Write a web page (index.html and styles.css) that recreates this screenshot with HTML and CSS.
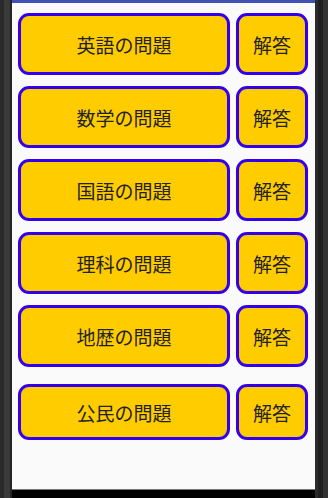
FILE: index.html
```html
<!DOCTYPE html>
<html lang="ja">
<head>
<meta charset="utf-8">
<link rel="stylesheet" href="styles.css">
</head>
<body>
<div class="device">
  <div class="side side-left"></div>
  <div class="screen">
    <div class="topbar"></div>
    <div class="list">
      <div class="row"><button class="btn main">英語の問題</button><button class="btn ans">解答</button></div>
      <div class="row"><button class="btn main">数学の問題</button><button class="btn ans">解答</button></div>
      <div class="row"><button class="btn main">国語の問題</button><button class="btn ans">解答</button></div>
      <div class="row"><button class="btn main">理科の問題</button><button class="btn ans">解答</button></div>
      <div class="row"><button class="btn main">地歴の問題</button><button class="btn ans">解答</button></div>
      <div class="row last"><button class="btn main">公民の問題</button><button class="btn ans">解答</button></div>
    </div>
    <div class="bottom"></div>
  </div>
  <div class="side side-right"></div>
</div>
</body>
</html>
```

FILE: styles.css
```css
html, body {
  margin: 0;
  padding: 0;
  width: 328px;
  height: 498px;
  overflow: hidden;
  background: #000;
}
.device {
  display: flex;
  width: 328px;
  height: 498px;
}
.side {
  flex: none;
  height: 100%;
}
.side-left {
  width: 12px;
  background: linear-gradient(to right, #2a2a2a 0, #2a2a2a 4px, #3a3a3a 4px, #3a3a3a 10px, #242424 10px);
}
.side-right {
  width: 13px;
  background: linear-gradient(to right, #2b2b2b 0, #2b2b2b 3px, #1f1f1f 3px, #1f1f1f 8px, #333 8px);
}
.screen {
  flex: 1;
  display: flex;
  flex-direction: column;
  background: #fafafa;
}
.topbar {
  height: 3px;
  background: #3f51b5;
  flex: none;
}
.list {
  flex: 1;
  display: flex;
  flex-direction: column;
  gap: 11px;
  padding: 10px 7px 0 6px;
}
.row {
  display: flex;
  gap: 6px;
  height: 62px;
}
.row.last {
  margin-top: 6px;
  height: 56px;
}
.btn {
  box-sizing: border-box;
  margin: 0;
  padding: 0;
  background: #ffcc00;
  border: 3px solid #3300ee;
  border-radius: 11px;
  font-family: "Noto Sans CJK JP", "Noto Sans", sans-serif;
  font-size: 19px;
  color: #222;
  height: 100%;
  display: flex;
  align-items: center;
  justify-content: center;
}
.main {
  width: 212px;
}
.ans {
  width: 72px;
}
.bottom {
  flex: none;
  height: 9px;
  background: #000;
  border-top: 1px solid #777;
  box-sizing: border-box;
}
```
